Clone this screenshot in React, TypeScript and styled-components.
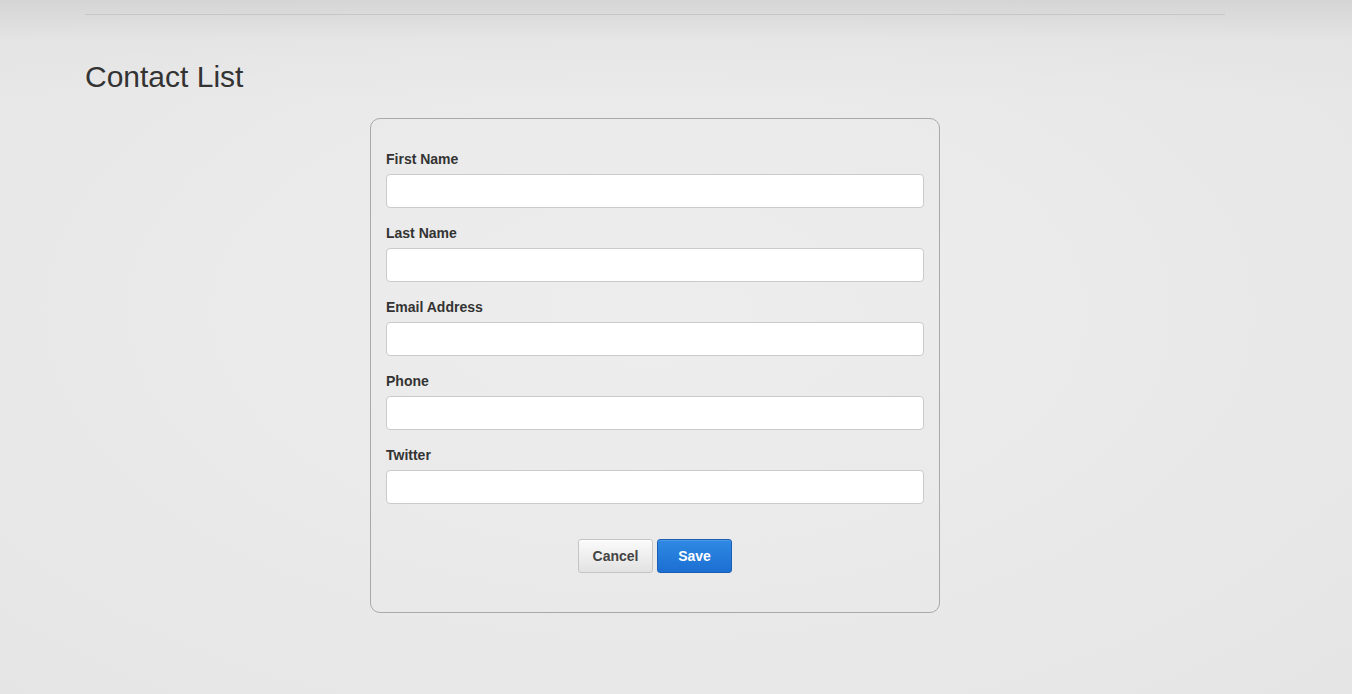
import * as React from 'react';
import styled, { createGlobalStyle } from 'styled-components';

const GlobalStyle = createGlobalStyle`
  html, body {
    margin: 0;
    padding: 0;
    min-height: 100%;
  }
  body {
    min-height: 694px;
    font-family: 'Liberation Sans', Arial, Helvetica, sans-serif;
    font-size: 14px;
    line-height: 1.428;
    color: #333;
    background:
      linear-gradient(to bottom, rgba(205, 205, 205, 0.7) 0px, rgba(222, 222, 222, 0.3) 40px, rgba(230, 230, 230, 0) 100px),
      radial-gradient(ellipse at 48% 45%, #ededed 0%, #eaeaea 45%, #e5e5e5 100%);
    background-attachment: fixed;
  }
  * {
    box-sizing: border-box;
  }
`;

const StyledContainer = styled.div`
  width: 1140px;
  margin-left: 85px;
  padding-top: 14px;
`;

const StyledRule = styled.hr`
  margin: 0;
  border: 0;
  border-top: 1px solid #c6c6c6;
`;

const StyledTitle = styled.h1`
  margin: 45px 0 0;
  font-size: 30px;
  font-weight: 400;
  line-height: 33px;
  color: #333;
`;

const StyledCardRow = styled.div`
  display: grid;
  grid-template-columns: 285px 570px 285px;
  margin-top: 25px;
`;

const StyledCard = styled.form`
  grid-column: 2;
  border: 1px solid #a9a9a9;
  border-radius: 10px;
  padding: 30px 15px 39px;
`;

const StyledField = styled.div`
  margin-bottom: 15px;
`;

const StyledLabel = styled.label`
  display: block;
  margin-bottom: 5px;
  font-size: 14px;
  font-weight: 700;
  line-height: 20px;
  color: #333;
`;

const StyledInput = styled.input`
  display: block;
  width: 100%;
  height: 34px;
  padding: 6px 12px;
  font-family: inherit;
  font-size: 14px;
  color: #555;
  background: #fff;
  border: 1px solid #cbcbcb;
  border-radius: 4px;
  outline: none;
`;

const StyledActions = styled.div`
  display: flex;
  justify-content: center;
  gap: 4px;
  padding-top: 20px;
`;

const StyledButton = styled.button<{ $primary?: boolean }>`
  width: 75px;
  height: 34px;
  padding: 0;
  font-family: inherit;
  font-size: 14px;
  font-weight: 700;
  border-radius: 3px;
  cursor: pointer;
  color: ${(p) => (p.$primary ? '#fff' : '#444')};
  border: 1px solid ${(p) => (p.$primary ? '#1a5fb4' : '#c4c4c4')};
  background: ${(p) =>
    p.$primary
      ? 'linear-gradient(to bottom, #2f89e3 0%, #1b6fd2 100%)'
      : 'linear-gradient(to bottom, #fbfbfb 0%, #e2e2e2 100%)'};
  box-shadow: ${(p) => (p.$primary ? 'inset 0 1px 0 rgba(255,255,255,0.15)' : 'inset 0 1px 0 #fff')};
`;

const fields = [
  { id: 'firstName', label: 'First Name' },
  { id: 'lastName', label: 'Last Name' },
  { id: 'email', label: 'Email Address' },
  { id: 'phone', label: 'Phone' },
  { id: 'twitter', label: 'Twitter' },
];

const App = () => {
  return (
    <>
      <GlobalStyle />
      <StyledContainer>
        <StyledRule />
        <StyledTitle>Contact List</StyledTitle>
        <StyledCardRow>
          <StyledCard onSubmit={(e) => e.preventDefault()}>
            {fields.map((f) => (
              <StyledField key={f.id}>
                <StyledLabel htmlFor={f.id}>{f.label}</StyledLabel>
                <StyledInput id={f.id} type="text" />
              </StyledField>
            ))}
            <StyledActions>
              <StyledButton type="button">Cancel</StyledButton>
              <StyledButton type="submit" $primary>
                Save
              </StyledButton>
            </StyledActions>
          </StyledCard>
        </StyledCardRow>
      </StyledContainer>
    </>
  );
};

export default App;
